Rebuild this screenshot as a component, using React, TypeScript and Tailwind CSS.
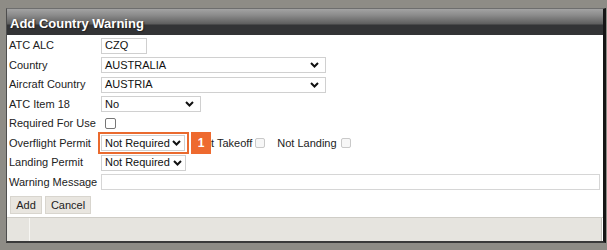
import React from "react";

const Chevron = () => (
  <svg width="9" height="6" viewBox="0 0 9 6" className="shrink-0">
    <path d="M1 1 L4.5 4.5 L8 1" fill="none" stroke="#111" strokeWidth="2" />
  </svg>
);

const Select = ({ value, w, pr = "pr-[6px]" }: { value: string; w: string; pr?: string }) => (
  <div
    className={`flex h-[16px] items-center justify-between whitespace-nowrap border border-[#d0d0d0] bg-white pl-[3px] text-[11px] leading-none text-[#111] ${pr} ${w}`}
  >
    <span>{value}</span>
    <Chevron />
  </div>
);

const Row = ({ label, h, children }: { label: string; h: string; children?: React.ReactNode }) => (
  <div className={`flex items-center ${h}`}>
    <div className="w-[92px] shrink-0 whitespace-nowrap text-[11px] leading-none text-[#222]">{label}</div>
    <div className="flex flex-1 items-center">{children}</div>
  </div>
);

export default function App() {
  return (
    <div
      className="h-[250px] w-[607px] overflow-hidden bg-[#8e8c86] pl-[6px] pt-[8px]"
      style={{ fontFamily: '"Liberation Sans", Arial, sans-serif' }}
    >
      <div className="flex h-[235px] w-[600px] flex-col border-b-2 border-l border-r-[3px] border-t border-b-[#3a3a3a] border-l-[#4e4e4e] border-r-[#161616] border-t-[#6e6e6e] bg-white">
        {/* Header */}
        <div className="relative h-[26px] shrink-0 bg-[linear-gradient(#a3a3a3_0px,#8c8c8c_6px,#5e5e5e_15px,#333436_16px,#333436_26px)]">
          <div
            className="absolute left-[3px] top-[8px] text-[13px] font-bold leading-none text-white"
            style={{ textShadow: "1px 1px 1px #222" }}
          >
            Add Country Warning
          </div>
        </div>

        {/* Body */}
        <div className="flex flex-1 flex-col pl-[2px] pt-[1px]">
          <Row label="ATC ALC" h="h-[19px]">
            <div className="flex h-[16px] w-[46px] items-center border border-[#cfcfcf] pl-[3px] text-[11px] leading-none text-[#111]">
              CZQ
            </div>
          </Row>
          <Row label="Country" h="h-[20px]">
            <Select value="AUSTRALIA" w="w-[225px]" />
          </Row>
          <Row label="Aircraft Country" h="h-[19px]">
            <Select value="AUSTRIA" w="w-[225px]" />
          </Row>
          <Row label="ATC Item 18" h="h-[20px]">
            <Select value="No" w="w-[100px]" />
          </Row>
          <Row label="Required For Use" h="h-[19px]">
            <div className="ml-[4px] h-[11px] w-[11px] rounded-[2px] border border-[#767676] bg-white" />
          </Row>
          <Row label="Overflight Permit" h="h-[20px]">
            <div className="relative">
              <Select value="Not Required" w="w-[84px]" pr="pr-[3px]" />
              <div className="absolute -bottom-[3px] -left-[3px] -right-[4px] -top-[3px] border-2 border-[#ea6a2e]" />
              <div className="absolute left-[90px] top-[-3px] z-10 flex h-[22px] w-[20px] items-center justify-center bg-[#ee6a2f] text-[12px] font-bold leading-none text-white">
                1
              </div>
            </div>
            <span className="ml-[12px] whitespace-nowrap text-[11px] leading-none text-[#222]">Not Takeoff</span>
            <div className="ml-[3px] h-[10px] w-[10px] rounded-[2px] border border-[#c9c9c9] bg-[#f7f7f7]" />
            <span className="ml-[12px] whitespace-nowrap text-[11px] leading-none text-[#222]">Not Landing</span>
            <div className="ml-[4px] h-[10px] w-[10px] rounded-[2px] border border-[#c9c9c9] bg-[#f7f7f7]" />
          </Row>
          <Row label="Landing Permit" h="h-[19px]">
            <Select value="Not Required" w="w-[85px]" pr="pr-[3px]" />
          </Row>
          <Row label="Warning Message" h="h-[20px]">
            <div className="h-[16px] w-[499px] border border-[#d6d6d6]" />
          </Row>
          <div className="flex gap-[3px] pl-[1px] pt-[4px]">
            <div className="flex h-[18px] w-[32px] items-center justify-center border border-[#d8d5ce] bg-[#e9e6e0] text-[11px] leading-none text-[#222]">
              Add
            </div>
            <div className="flex h-[18px] w-[46px] items-center justify-center border border-[#d8d5ce] bg-[#e9e6e0] text-[11px] leading-none text-[#222]">
              Cancel
            </div>
          </div>
        </div>

        {/* Footer */}
        <div className="flex h-[24px] shrink-0 border-t border-[#cfcdc7] bg-[#e6e4df]">
          <div className="w-[23px] border-r border-[#f7f6f3]" />
          <div className="flex-1 border-r border-[#c4c2bc]" />
          <div className="w-[1px] bg-white" />
        </div>
      </div>
    </div>
  );
}
